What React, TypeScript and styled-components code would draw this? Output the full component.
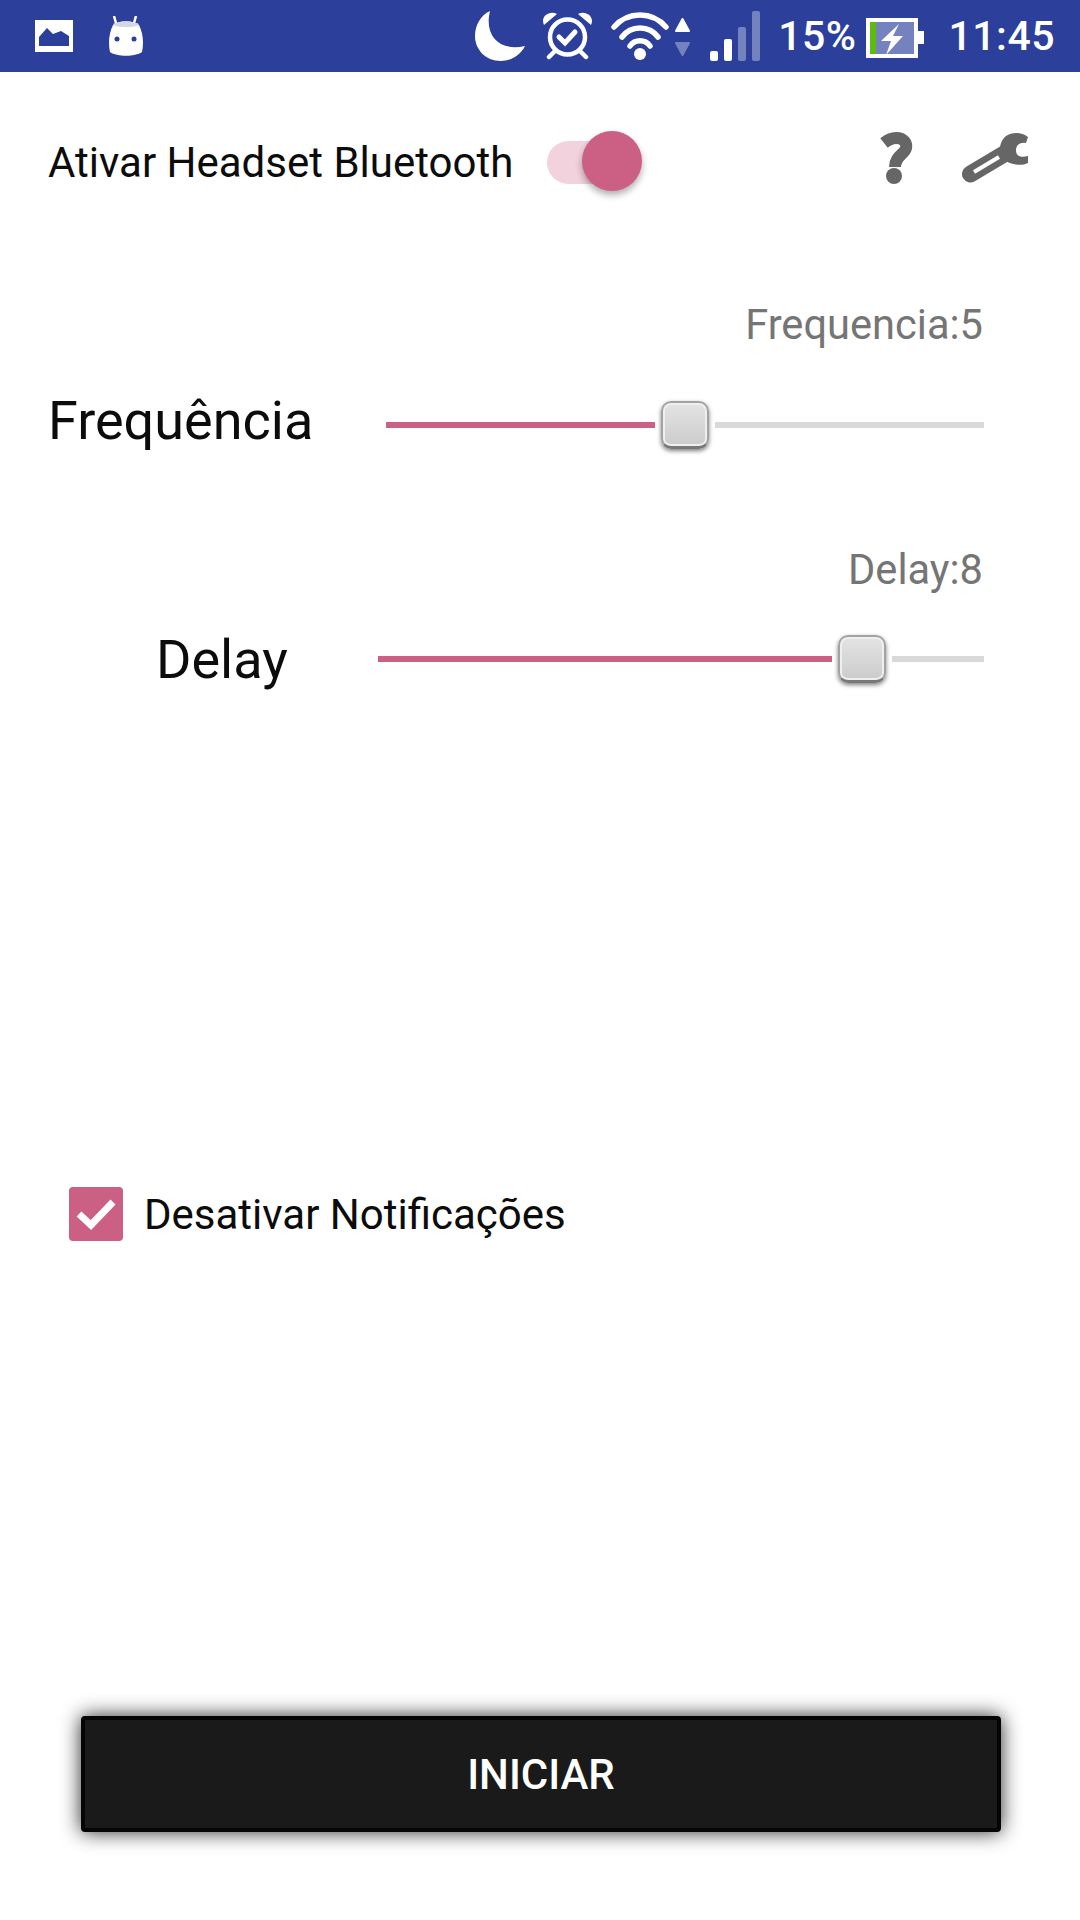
import React from "react";
import styled, { createGlobalStyle } from "styled-components";

const GlobalStyle = createGlobalStyle`
  html, body {
    margin: 0;
    padding: 0;
    background: #fff;
    font-family: Roboto, "Liberation Sans", sans-serif;
  }
`;

const Page = styled.div`
  width: 1080px;
  height: 1920px;
  display: flex;
  flex-direction: column;
  overflow: hidden;
  background: #fff;
`;

// Barra de status
const StatusBar = styled.div`
  height: 72px;
  background: #2b3f9b;
  display: flex;
  align-items: center;
  padding: 0 25px 0 35px;
  color: #fff;
  flex-shrink: 0;
`;
const StatusIcon = styled.svg<{ $gap?: number }>`
  display: block;
  flex-shrink: 0;
  margin-left: ${(p) => p.$gap ?? 0}px;
`;
const Spacer = styled.div`
  flex: 1;
`;
const StatusText = styled.span<{ $gap: number }>`
  font-size: 41px;
  font-weight: 500;
  line-height: 72px;
  margin-left: ${(p) => p.$gap}px;
  letter-spacing: 0.5px;
`;

const HeadsetRow = styled.div`
  height: 58px;
  margin-top: 61px;
  padding: 0 52px 0 48px;
  display: flex;
  align-items: center;
`;
const HeadsetLabel = styled.span`
  font-size: 42px;
  color: #0c0c0c;
`;
const Toggle = styled.div`
  position: relative;
  width: 73px;
  height: 43px;
  margin-left: 34px;
  border-radius: 22px;
  background: #f2d2dc;
`;
const ToggleKnob = styled.div`
  position: absolute;
  top: -10px;
  right: -22px;
  width: 60px;
  height: 60px;
  border-radius: 50%;
  background: #cb6084;
  box-shadow: 0 4px 7px rgba(0, 0, 0, 0.32);
`;
const ToolIcon = styled.svg<{ $gap: number }>`
  display: block;
  margin: 0 0 9px ${(p) => p.$gap}px;
`;

const SliderValue = styled.div<{ $top: number }>`
  margin-top: ${(p) => p.$top}px;
  padding-right: 97px;
  text-align: right;
  font-size: 41.6px;
  line-height: 48px;
  color: #757575;
`;
const SliderRow = styled.div<{ $top: number; $left: number }>`
  margin-top: ${(p) => p.$top}px;
  padding: 0 96px 0 ${(p) => p.$left}px;
  height: 70px;
  display: flex;
  align-items: center;
`;
const SliderName = styled.span<{ $width: number; $lift: number }>`
  width: ${(p) => p.$width}px;
  flex-shrink: 0;
  padding-bottom: ${(p) => p.$lift}px;
  font-size: 54px;
  color: #0c0c0c;
`;
const Track = styled.div`
  position: relative;
  flex: 1;
  height: 6px;
  background: #d9d9d9;
`;
const Progress = styled.div`
  position: absolute;
  left: 0;
  top: 0;
  bottom: 0;
  background: #cb6084;
`;
const ThumbGap = styled.div`
  position: absolute;
  top: -3px;
  width: 60px;
  height: 12px;
  margin-left: -30px;
  background: #fff;
`;
const Thumb = styled.div`
  position: absolute;
  top: -21px;
  width: 48px;
  height: 48px;
  margin-left: -24px;
  box-sizing: border-box;
  border-radius: 10px;
  border: 2px solid #a3a3a3;
  border-bottom: 3px solid #777;
  background: linear-gradient(#e4e4e4, #cbcbcb);
  box-shadow: 0 2px 4px rgba(0, 0, 0, 0.5), inset 0 0 0 2px #efefef;
`;

const CheckRow = styled.div`
  margin-top: 493px;
  padding-left: 69px;
  display: flex;
  align-items: center;
`;
const CheckBox = styled.div`
  width: 54px;
  height: 54px;
  border-radius: 4px;
  background: #cb6084;
  display: flex;
  align-items: center;
  justify-content: center;
`;
const CheckLabel = styled.span`
  margin-left: 21px;
  font-size: 42px;
  color: #0c0c0c;
`;

const StartButton = styled.button`
  margin: auto 79px 88px 81px;
  height: 116px;
  box-sizing: border-box;
  border: 4px solid #050505;
  border-radius: 4px;
  background: #1a1a1a;
  color: #fff;
  font-family: Roboto, "Liberation Sans", sans-serif;
  font-size: 42px;
  font-weight: 500;
  box-shadow: 0 0 20px rgba(0, 0, 0, 0.85);
`;

const SliderBlock: React.FC<{
  value: string;
  name: string;
  valueTop: number;
  rowTop: number;
  left: number;
  nameWidth: number;
  lift: number;
  thumb: number;
}> = ({ value, name, valueTop, rowTop, left, nameWidth, lift, thumb }) => (
  <>
    <SliderValue $top={valueTop}>{value}</SliderValue>
    <SliderRow $top={rowTop} $left={left}>
      <SliderName $width={nameWidth} $lift={lift}>{name}</SliderName>
      <Track>
        <Progress style={{ width: `${thumb}px` }} />
        <ThumbGap style={{ left: `${thumb}px` }} />
        <Thumb style={{ left: `${thumb}px` }} />
      </Track>
    </SliderRow>
  </>
);

const App: React.FC = () => (
  <Page>
    <GlobalStyle />
    <StatusBar>
      {/* notificação de imagem */}
      <StatusIcon width="38" height="32" viewBox="0 0 38 32">
        <path fillRule="evenodd" fill="#fff" d="M0 0h38v32H0zM4 26V17l8-9 6 6 8-3 8 5v10z" />
      </StatusIcon>
      {/* mascote android */}
      <StatusIcon $gap={35} width="36" height="40" viewBox="0 0 36 40">
        <path stroke="#fff" strokeWidth="2.5" d="M6 0l2.5 9M28 0l-2.5 9" />
        <path fill="#fff" d="M5 9C11 4 25 4 31 9c4 8 5 18 3 27-7 5-25 5-32 0C0 27 1 17 5 9z" />
        <path fill="#d3d8e6" d="M5 9C11 4 25 4 31 9c-6 3-20 3-26 0z" />
        <circle cx="9" cy="23" r="2.5" fill="#2b3f9b" />
        <circle cx="26" cy="23" r="2.5" fill="#2b3f9b" />
      </StatusIcon>
      <Spacer />
      {/* lua */}
      <StatusIcon width="50" height="50" viewBox="0 0 50 50">
        <path fill="#fff" d="M15 0C9 24 24 41 50 35 45 45 35 50 26 50 10 50 0 38 0 25 0 14 6 4 15 0z" />
      </StatusIcon>
      {/* alarme */}
      <StatusIcon $gap={17} width="51" height="48" viewBox="0 0 51 48" fill="none" stroke="#fff">
        <circle cx="25.5" cy="25" r="17.5" strokeWidth="4.5" />
        <path strokeWidth="5" strokeLinecap="round" d="M17 25l6 6 10-11" />
        <path strokeWidth="4.5" strokeLinecap="round" d="M12 40l-5 5M39 40l5 5" />
        <path fill="#fff" stroke="none" d="M2 13C-2 5 7-2 15 2zM49 13C53 5 44-2 36 2z" />
      </StatusIcon>
      {/* wifi */}
      <StatusIcon $gap={18} width="58" height="48" viewBox="0 0 58 48" fill="none" stroke="#fff" strokeWidth="5.5" strokeLinecap="round">
        <path d="M3 15C17-1 41-1 55 15M11 25C20 13 38 13 47 25M19 34C24 27 34 27 39 34" />
        <circle cx="29" cy="42" r="6" fill="#fff" stroke="none" />
      </StatusIcon>
      <StatusIcon $gap={6} width="15" height="42" viewBox="0 0 15 42" strokeLinejoin="round" strokeWidth="2">
        <path fill="#fff" stroke="#fff" d="M7.5 4L14 16H1z" />
        <path fill="#7482bd" stroke="#7482bd" d="M7.5 40L1 28h13z" />
      </StatusIcon>
      {/* sinal */}
      <StatusIcon $gap={20} width="50" height="50" viewBox="0 0 50 50">
        <rect x="0" y="40" width="8" height="10" rx="2" fill="#fff" />
        <rect x="14" y="28" width="8" height="22" rx="2" fill="#fff" />
        <rect x="28" y="16" width="8" height="34" rx="2" fill="#7482bd" />
        <rect x="42" y="0" width="8" height="50" rx="2" fill="#7482bd" />
      </StatusIcon>
      <StatusText $gap={18}>15%</StatusText>
      {/* bateria */}
      <StatusIcon $gap={10} width="58" height="44" viewBox="0 0 58 44">
        <rect x="2" y="6" width="48" height="36" fill="#7482bd" stroke="#fff" strokeWidth="4" />
        <rect x="4" y="8" width="6" height="32" fill="#5fbb12" />
        <rect x="52" y="17" width="6" height="13" fill="#fff" />
        <path fill="#fff" d="M33 10L15 27h10l-5 14 17-19H27z" />
      </StatusIcon>
      <StatusText $gap={24}>11:45</StatusText>
    </StatusBar>

    <HeadsetRow>
      <HeadsetLabel>Ativar Headset Bluetooth</HeadsetLabel>
      <Toggle>
        <ToggleKnob />
      </Toggle>
      <Spacer />
      {/* ajuda */}
      <ToolIcon $gap={0} width="33" height="52" viewBox="0 0 33 52">
        <path fill="none" stroke="#666" strokeWidth="12" d="M4 11C9 7 13 6 16 6c8 0 11 5 10 10-1 6-11 8-11 19" />
        <circle cx="14" cy="44" r="8" fill="#666" />
      </ToolIcon>
      {/* configurações */}
      <ToolIcon $gap={49} width="66" height="52" viewBox="0 0 66 52">
        <path stroke="#666" strokeWidth="17" strokeLinecap="round" d="M8.5 42L42 22" />
        <path fill="#666" d="M44 4C50 0 60 0 66 5L64 11C58 10 54 13 54 18 54 24 58 26 66 24L66 31C58 35 46 32 40 26 36 18 38 9 44 4z" />
        <path stroke="#fff" strokeWidth="4" d="M12 40L37 25" />
      </ToolIcon>
    </HeadsetRow>

    <SliderBlock value="Frequencia:5" name="Frequência" valueTop={110} rowTop={41} left={48} nameWidth={338} lift={10} thumb={299} />
    <SliderBlock value="Delay:8" name="Delay" valueTop={86} rowTop={30} left={156} nameWidth={222} lift={0} thumb={484} />

    <CheckRow>
      <CheckBox>
        <svg width="40" height="32" viewBox="0 0 40 32" fill="none" stroke="#fff" strokeWidth="7">
          <path d="M3 16l12 11L37 4" />
        </svg>
      </CheckBox>
      <CheckLabel>Desativar Notificações</CheckLabel>
    </CheckRow>

    <StartButton>INICIAR</StartButton>
  </Page>
);

export default App;
